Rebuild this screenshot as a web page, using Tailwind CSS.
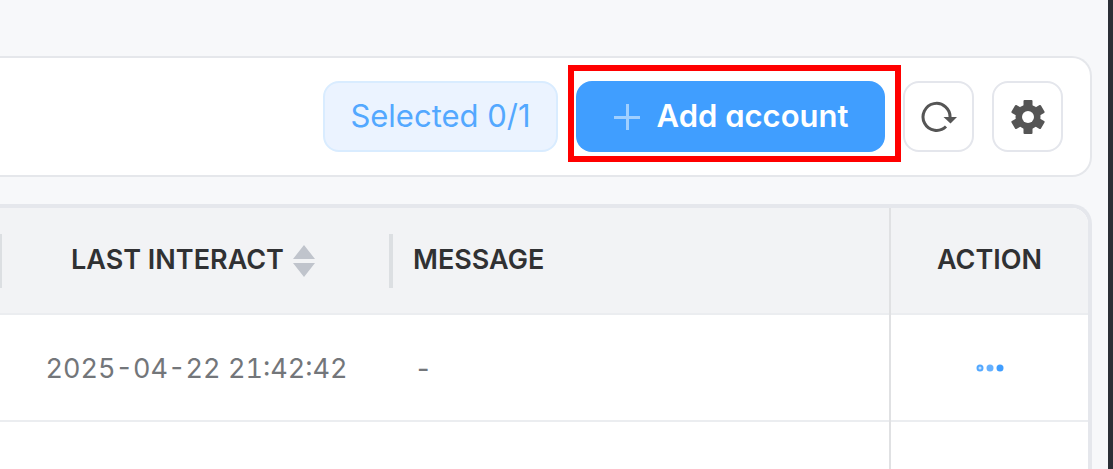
<!DOCTYPE html>
<html lang="en">
<head>
  <meta charset="UTF-8" />
  <title>Accounts</title>
  <script src="https://cdn.jsdelivr.net/npm/@tailwindcss/browser@4"></script>
</head>
<body class="min-h-screen flex flex-col bg-[#f7f8fa] border-r-[5px] border-[#2b2f36] font-['Inter',sans-serif] overflow-x-hidden">

  <!-- Toolbar -->
  <div class="mt-14 mr-4 flex items-center justify-end gap-[18px] bg-white border-2 border-l-0 border-[#e5e7eb] rounded-r-[20px] py-[23px] pr-[27px]">
    <button type="button" class="h-[71px] w-[235px] rounded-2xl border-2 border-[#d9ecff] bg-[#ebf3ff] text-[#53a8ff] text-[31px]">Selected 0/1</button>

    <div class="relative">
      <button type="button" class="h-[71px] w-[309px] flex items-center justify-center gap-4 rounded-2xl bg-[#409eff] text-white text-[31px] font-semibold [font-feature-settings:'cv11']">
        <svg class="size-7" viewBox="0 0 28 28" fill="none" stroke="#a0cfff" stroke-width="3" aria-hidden="true"><path d="M14.500 1v26M1 14.500h26" /></svg>
        Add account
      </button>
      <div class="absolute -left-2 -top-4 -right-4 -bottom-2.5 border-[6px] border-[#ff0000] pointer-events-none"></div>
    </div>

    <button type="button" aria-label="Refresh" class="size-[71px] flex items-center justify-center rounded-2xl border-2 border-[#e4e6ec] bg-white">
      <svg class="size-9" viewBox="0 0 36 36" fill="none" aria-hidden="true">
        <path d="M25 27.500A13.500 13.500 0 1 1 29 19" stroke="#555" stroke-width="3" />
        <path d="M22.500 18h13.500l-6.500 6.500z" fill="#555" />
      </svg>
    </button>

    <button type="button" aria-label="Settings" class="size-[71px] flex items-center justify-center rounded-2xl border-2 border-[#e4e6ec] bg-white">
      <svg class="size-9" viewBox="-18 -18 36 36" fill="#555" aria-hidden="true">
        <rect x="-4.500" y="-17" width="9" height="34" rx="1" />
        <rect x="-4.500" y="-17" width="9" height="34" rx="1" transform="rotate(60)" />
        <rect x="-4.500" y="-17" width="9" height="34" rx="1" transform="rotate(120)" />
        <circle r="12.500" />
        <circle r="6" fill="#fff" />
      </svg>
    </button>
  </div>

  <!-- Accounts table -->
  <div class="mt-[27px] mr-4 grow flex flex-col bg-white border-t-4 border-r-4 border-[#e5e7ec] rounded-tr-[20px] overflow-hidden">
    <table class="w-full grow border-collapse">
      <thead class="bg-[#f2f3f5] text-[#303133] text-[27px]">
        <tr class="h-[106px] border-b-2 border-[#ebedf0]">
          <th scope="col" class="w-[393px] p-0 font-semibold">
            <div class="h-[54px] flex items-center justify-center gap-2 border-l-2 border-r-4 border-[#dcdfe2] pr-1">
              LAST INTERACT
              <svg class="w-6 h-8" viewBox="0 0 24 32" fill="#c0c4cc" aria-hidden="true"><path d="M12 0l11 14H1zM12 32L1 18h22z" /></svg>
            </div>
          </th>
          <th scope="col" class="px-5 font-semibold text-left">MESSAGE</th>
          <th scope="col" class="w-[198px] p-0 font-semibold border-l-2 border-[#e0e1e3]">ACTION</th>
        </tr>
      </thead>
      <tbody class="text-[#73767a] text-[27px]">
        <tr class="h-[107px] border-b-2 border-[#ebedf0]">
          <td class="pt-1 text-center tabular-nums">2025-04-22 21:42:42</td>
          <td class="pt-1 px-6">-</td>
          <td class="border-l-2 border-[#e0e1e3]">
            <button type="button" aria-label="More actions" class="mx-auto block">
              <svg class="w-7 h-2" viewBox="0 0 28 8" fill="#409eff" aria-hidden="true">
                <circle cx="4" cy="4" r="2.500" fill="#c6e2ff" stroke="#53a8ff" stroke-width="2" />
                <circle cx="14" cy="4" r="3.500" fill="#66b1ff" />
                <circle cx="24" cy="4" r="3.500" />
              </svg>
            </button>
          </td>
        </tr>
        <tr>
          <td></td>
          <td></td>
          <td class="border-l-2 border-[#e0e1e3]"></td>
        </tr>
      </tbody>
    </table>
  </div>

</body>
</html>
